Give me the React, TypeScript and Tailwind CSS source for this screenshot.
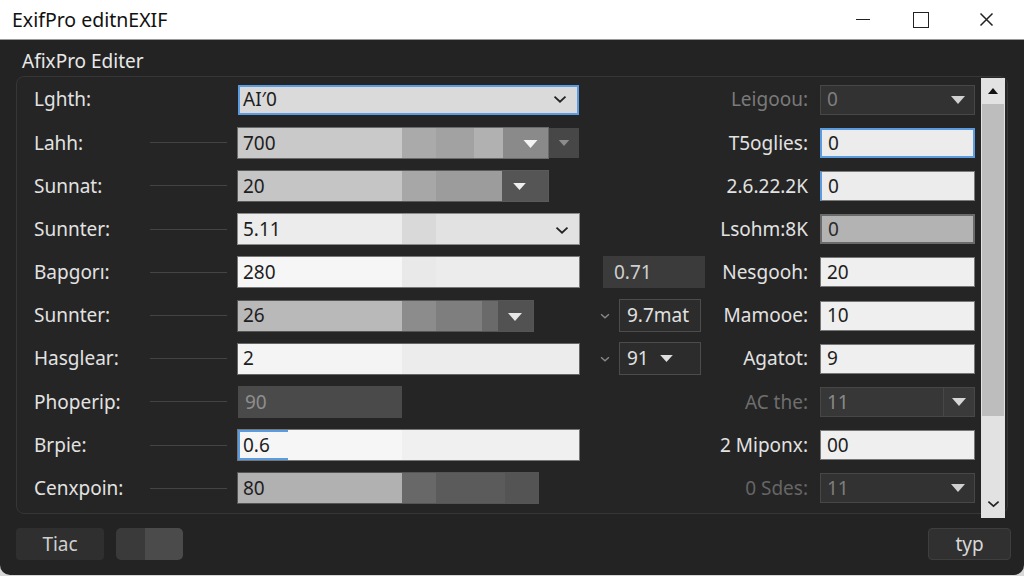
import React from "react";

const Tri = ({ c = "#f0f0f0", w = 16, h = 10 }: { c?: string; w?: number; h?: number }) => (
  <svg width={w} height={h} viewBox="0 0 16 10">
    <path d="M1 1 L15 1 L8 9 Z" fill={c} />
  </svg>
);

const Chev = ({ c = "#222", w = 14 }: { c?: string; w?: number }) => (
  <svg width={w} height={w * 0.6} viewBox="0 0 14 8">
    <path d="M1.5 1.5 L7 6.5 L12.5 1.5" fill="none" stroke={c} strokeWidth="1.8" />
  </svg>
);

type Seg = { w: number; c: string };

const SegField = ({ text, segs, h = 30, border = "#555", tc = "#1e1e1e", children }: { text: string; segs: Seg[]; h?: number; border?: string; tc?: string; children?: React.ReactNode }) => (
  <div className="relative flex overflow-hidden" style={{ height: h, outline: `1px solid ${border}` }}>
    {segs.map((s, i) => (
      <div key={i} className="h-full shrink-0" style={{ width: s.w, background: s.c }} />
    ))}
    <div className="absolute inset-0 flex items-center pl-[5px] text-[19px]" style={{ color: tc }}>
      {text}
    </div>
    {children}
  </div>
);

const leftLabels = ["Lghth:", "Lahh:", "Sunnat:", "Sunnter:", "Bapgorı:", "Sunnter:", "Hasglear:", "Phoperip:", "Brpie:", "Cenxpoin:"];

const rightRows: { label: string; lc: string; value: string; kind: string }[] = [
  { label: "Leigoou:", lc: "#7a7a7a", value: "0", kind: "darkdrop" },
  { label: "T5oglies:", lc: "#e2e2e2", value: "0", kind: "focus" },
  { label: "2.6.22.2K", lc: "#e2e2e2", value: "0", kind: "focusleft" },
  { label: "Lsohm:8K", lc: "#e2e2e2", value: "0", kind: "gray" },
  { label: "Nesgooh:", lc: "#e2e2e2", value: "20", kind: "white" },
  { label: "Mamooe:", lc: "#e2e2e2", value: "10", kind: "white" },
  { label: "Agatot:", lc: "#e2e2e2", value: "9", kind: "white" },
  { label: "AC the:", lc: "#6e6e6e", value: "11", kind: "darkdrop2" },
  { label: "2 Miponx:", lc: "#e2e2e2", value: "00", kind: "white" },
  { label: "0 Sdes:", lc: "#666", value: "11", kind: "darkdrop" },
];

function LeftField({ i }: { i: number }) {
  switch (i) {
    case 0:
      return (
        <div className="flex h-[30px] w-[341px] items-center justify-between border-2 border-[#5b9be0] bg-[#dadada] pl-[3px] pr-[10px] text-[19px] text-[#1e1e1e]">
          <span>AI′0</span>
          <Chev />
        </div>
      );
    case 1:
      return (
        <div className="flex w-[341px]">
          <div className="w-[310px]">
            <SegField text="700" border="#6a6a6a" segs={[{ w: 164, c: "#c9c9c9" }, { w: 34, c: "#aaaaaa" }, { w: 38, c: "#a2a2a2" }, { w: 29, c: "#b1b1b1" }, { w: 45, c: "#8a8a8a" }]}>
              <div className="absolute right-[9px] top-[11px]"><Tri c="#f4f4f4" w={17} h={10} /></div>
            </SegField>
          </div>
          <div className="flex h-[30px] w-[31px] items-center justify-center bg-[#474747]">
            <Tri c="#8c8c8c" w={12} h={8} />
          </div>
        </div>
      );
    case 2:
      return (
        <div className="w-[310px]">
          <SegField text="20" border="#5a5a5a" segs={[{ w: 164, c: "#c5c5c5" }, { w: 34, c: "#a7a7a7" }, { w: 66, c: "#9c9c9c" }, { w: 46, c: "#555555" }]}>
            <div className="absolute right-[21px] top-[11px]"><Tri c="#efefef" w={15} h={9} /></div>
          </SegField>
        </div>
      );
    case 3:
      return (
        <div className="w-[341px]">
          <SegField text="5.11" border="#8a8a8a" segs={[{ w: 164, c: "#ececec" }, { w: 34, c: "#d9d9d9" }, { w: 143, c: "#e2e2e2" }]}>
            <div className="absolute right-[10px] top-[12px]"><Chev /></div>
          </SegField>
        </div>
      );
    case 4:
      return (
        <div className="w-[341px]">
          <SegField text="280" border="#777" segs={[{ w: 164, c: "#f6f6f6" }, { w: 34, c: "#e9e9e9" }, { w: 143, c: "#ececec" }]} />
        </div>
      );
    case 5:
      return (
        <div className="w-[295px]">
          <SegField text="26" border="#555" segs={[{ w: 164, c: "#b9b9b9" }, { w: 34, c: "#8c8c8c" }, { w: 46, c: "#7e7e7e" }, { w: 16, c: "#6a6a6a" }, { w: 35, c: "#525252" }]}>
            <div className="absolute right-[10px] top-[11px]"><Tri c="#e8e8e8" w={16} h={10} /></div>
          </SegField>
        </div>
      );
    case 6:
      return (
        <div className="w-[341px]">
          <SegField text="2" border="#666" segs={[{ w: 164, c: "#f4f4f4" }, { w: 177, c: "#ececec" }]} />
        </div>
      );
    case 7:
      return (
        <div className="flex h-[32px] w-[164px] items-center bg-[#4a4a4a] pl-[7px] text-[19px] text-[#8e8e8e]">90</div>
      );
    case 8:
      return (
        <div className="relative w-[341px]">
          <SegField text="0.6" border="#777" segs={[{ w: 164, c: "#f6f6f6" }, { w: 177, c: "#f0f0f0" }]} />
          <div className="absolute left-0 top-0 h-full w-[50px] border-b-2 border-l-2 border-t-2 border-[#5b9be0]" />
        </div>
      );
    default:
      return (
        <div className="w-[300px]">
          <SegField text="80" border="#555" segs={[{ w: 164, c: "#b1b1b1" }, { w: 34, c: "#686868" }, { w: 69, c: "#5b5b5b" }, { w: 33, c: "#545454" }]} />
        </div>
      );
  }
}

function Middle({ i }: { i: number }) {
  if (i === 4)
    return (
      <div className="ml-[24px] flex h-[32px] w-[102px] items-center bg-[#3b3b3b] pl-[11px] text-[19px] text-[#cfcfcf]">0.71</div>
    );
  if (i === 5 || i === 6)
    return (
      <div className="ml-[21px] flex items-center">
        <Chev c="#8a8a8a" w={10} />
        <div className="ml-[9px] flex h-[33px] w-[82px] items-center border border-[#4c4c4c] bg-[#2c2c2c] pl-[7px] text-[19px] text-[#e0e0e0]">
          {i === 5 ? (
            "9.7mat"
          ) : (
            <>
              <span>91</span>
              <span className="ml-[10px]"><Tri c="#dedede" w={15} h={9} /></span>
            </>
          )}
        </div>
      </div>
    );
  return null;
}

function RightField({ kind, value }: { kind: string; value: string }) {
  const base = "flex h-[30px] w-[155px] items-center pl-[6px] text-[19px]";
  if (kind === "darkdrop")
    return (
      <div className={`${base} justify-between border border-[#474747] bg-[#323232] pr-[8px] text-[#7e7e7e]`}>
        <span>{value}</span>
        <Tri c="#d0d0d0" w={16} h={10} />
      </div>
    );
  if (kind === "darkdrop2")
    return (
      <div className={`${base} border border-[#474747] bg-[#373737] pr-0 text-[#8a8a8a]`}>
        <span className="flex-1">{value}</span>
        <div className="flex h-full w-[31px] items-center justify-center border-l border-[#474747] bg-[#3a3a3a]">
          <Tri c="#d6d6d6" w={16} h={10} />
        </div>
      </div>
    );
  if (kind === "focus")
    return <div className={`${base} border-2 border-[#5b9be0] bg-[#ececec] text-[#1e1e1e]`}>{value}</div>;
  if (kind === "focusleft")
    return <div className={`${base} border border-l-2 border-[#7a7a7a] border-l-[#5b9be0] bg-[#ececec] text-[#1e1e1e]`}>{value}</div>;
  if (kind === "gray")
    return <div className={`${base} border-2 border-[#6a6a6a] bg-[#b3b3b3] text-[#2a2a2a]`}>{value}</div>;
  return <div className={`${base} border border-[#777] bg-[#efefef] text-[#1e1e1e]`}>{value}</div>;
}

export default function App() {
  return (
    <div className="h-[576px] w-[1024px] overflow-hidden bg-[#d8d8d8]" style={{ fontFamily: '"Noto Sans", "Open Sans", sans-serif' }}>
      <div className="flex h-[575px] flex-col overflow-hidden rounded-b-[10px] bg-[#232323]">
        {/* Title bar */}
        <div className="flex h-[40px] shrink-0 items-center border-b border-[#9a9a9a] bg-white pl-[12px] text-[#111]">
          <span className="text-[19.5px]">ExifPro editnEXIF</span>
          <div className="ml-auto flex h-full items-center">
            <div className="flex w-[58px] justify-center">
              <div className="h-[1.5px] w-[14px] bg-[#222]" />
            </div>
            <div className="flex w-[58px] justify-center">
              <div className="h-[16px] w-[16px] border-[1.5px] border-[#222]" />
            </div>
            <div className="flex w-[74px] justify-center pr-[2px]">
              <svg width="15" height="15" viewBox="0 0 15 15">
                <path d="M1.5 1.5 L13.5 13.5 M13.5 1.5 L1.5 13.5" stroke="#222" strokeWidth="1.5" />
              </svg>
            </div>
          </div>
        </div>

        {/* Group heading */}
        <div className="pl-[22px] pt-[9px] text-[19px] leading-[25px] text-[#e8e8e8]">AfixPro Editer</div>

        {/* Group box */}
        <div className="mx-[16px] mt-[2px] flex h-[438px] rounded-[8px] border border-[#363636] bg-[#252525]">
          <div className="flex flex-col pt-[1px]">
            {leftLabels.map((l, i) => (
              <div key={i} className="flex h-[43.2px] items-center">
                <div className="w-[133px] pl-[17px] text-[19px] text-[#e2e2e2]">{l}</div>
                <div className="w-[77px]">{i > 0 && <div className="h-px w-[77px] bg-[#444]" />}</div>
                <div className="ml-[11px] w-[341px]">
                  <LeftField i={i} />
                </div>
                <div className="w-[126px]">
                  <Middle i={i} />
                </div>
                <div className="w-[103px] whitespace-nowrap text-right text-[19px]" style={{ color: rightRows[i].lc }}>
                  {rightRows[i].label}
                </div>
                <div className="ml-[12px]">
                  <RightField kind={rightRows[i].kind} value={rightRows[i].value} />
                </div>
              </div>
            ))}
          </div>
          {/* Scrollbar */}
          <div className="ml-[6px] mt-[1px] flex h-[440px] w-[24px] flex-col items-center bg-[#e2e2e2]">
            <div className="flex h-[26px] items-center justify-center">
              <svg width="12" height="8" viewBox="0 0 12 8">
                <path d="M6 1 L11 7 L1 7 Z" fill="#111" />
              </svg>
            </div>
            <div className="h-[312px] w-[22px] bg-[#bdbdbd]" />
            <div className="mt-auto flex h-[24px] items-center justify-center pb-[4px]">
              <Chev c="#222" w={13} />
            </div>
          </div>
        </div>

        {/* Footer */}
        <div className="flex items-center px-[16px] pt-[14px]">
          <div className="flex h-[32px] w-[88px] items-center justify-center rounded-[4px] bg-[#2f2f2f] text-[19px] text-[#cfcfcf]">Tiac</div>
          <div className="ml-[12px] flex h-[32px] w-[67px] overflow-hidden rounded-[5px]">
            <div className="w-[29px] bg-[#3a3a3a]" />
            <div className="w-[38px] bg-[#4b4b4b]" />
          </div>
          <div className="ml-auto mr-[-3px] flex h-[32px] w-[83px] items-center justify-center rounded-[4px] border border-[#3e3e3e] bg-[#303030] text-[19px] text-[#d8d8d8]">typ</div>
        </div>
      </div>
    </div>
  );
}
